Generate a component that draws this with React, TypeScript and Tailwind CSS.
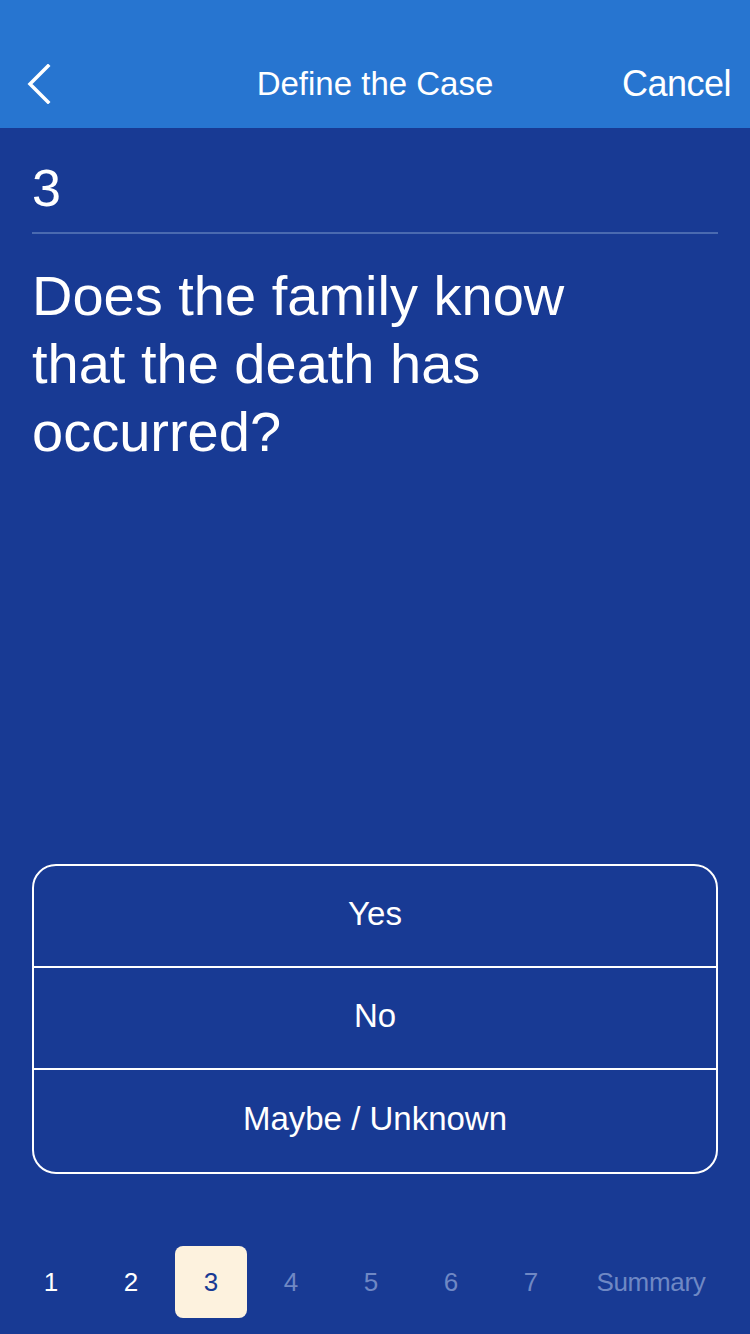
import React from "react";

export default function App() {
  const pages = ["1", "2", "3", "4", "5", "6", "7"];
  return (
    <div
      className="w-[750px] h-[1334px] bg-[#183a94] flex flex-col text-white overflow-hidden"
      style={{ fontFamily: '"Liberation Sans", Arial, sans-serif' }}
    >
      <header className="h-[128px] bg-[#2775d0] flex items-end pb-[24px] relative shrink-0">
        <div className="w-full h-[40px] flex items-center justify-between pl-[25px] pr-[19px]">
          <svg width="28" height="40" viewBox="0 0 28 40" fill="none">
            <path d="M23 2 L5 20 L23 38" stroke="white" strokeWidth="3.5" strokeLinecap="square" />
          </svg>
          <span className="text-[33px] absolute left-0 right-0 text-center pointer-events-none">
            Define the Case
          </span>
          <span className="text-[36px] tracking-[-0.5px]">Cancel</span>
        </div>
      </header>

      <div className="px-[32px] flex flex-col flex-1">
        <div className="pt-[34px] pb-[18px] text-[52px] leading-[52px] border-b-2 border-[#4a6ab0]">
          3
        </div>
        <div className="pt-[28px] text-[56px] leading-[68px] pr-[100px]">
          Does the family know that the death has occurred?
        </div>

        <div className="flex-1" />

        <div className="border-2 border-white rounded-[24px] flex flex-col mb-[72px]">
          {["Yes", "No", "Maybe / Unknown"].map((o, i) => (
            <div
              key={o}
              className={`h-[102px] pb-[5px] flex items-center justify-center text-[33px] ${
                i < 2 ? "border-b-2 border-white" : ""
              }`}
            >
              {o}
            </div>
          ))}
        </div>
      </div>

      <nav className="h-[88px] flex items-start pl-[15px] gap-[8px] shrink-0">
        {pages.map((p, i) => (
          <div
            key={p}
            className={`w-[72px] h-[72px] flex items-center justify-center text-[26px] rounded-[8px] ${
              i === 2
                ? "bg-[#fdf2de] text-[#183a94]"
                : i < 2
                ? "text-white"
                : "text-[#6f88c4]"
            }`}
          >
            {p}
          </div>
        ))}
        <div className="w-[152px] h-[72px] flex items-center justify-center text-[26px] text-[#6f88c4] tracking-[-0.3px]">
          Summary
        </div>
      </nav>
    </div>
  );
}
